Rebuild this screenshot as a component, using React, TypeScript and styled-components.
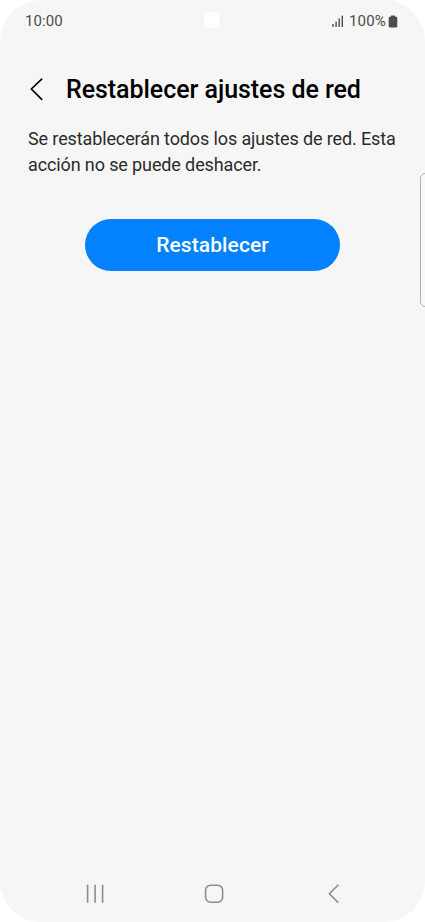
import styled, { createGlobalStyle } from "styled-components";

const GlobalStyle = createGlobalStyle`
    * {
        box-sizing: border-box;
    }
    body {
        margin: 0;
        background: #ffffff;
        font-family: Roboto, "Liberation Sans", sans-serif;
    }
`;

const Screen = styled.div`
    position: relative;
    display: flex;
    flex-direction: column;
    width: 425px;
    height: 922px;
    border-radius: 41px;
    background: #f6f6f6;
    overflow: hidden;
`;

const StatusBar = styled.header`
    display: flex;
    justify-content: space-between;
    align-items: center;
    height: 42px;
    padding: 0 27px 0 25px;
    color: #4c4c4c;
    font-size: 15px;
    line-height: 18px;
`;

const Time = styled.span`
    letter-spacing: 0.1px;
`;

const Indicators = styled.div`
    display: flex;
    align-items: center;
`;

const Percent = styled.span`
    margin: 0 2px 0 5px;
    letter-spacing: 0.2px;
`;

const Camera = styled.div`
    position: absolute;
    top: 12px;
    left: 204px;
    width: 16px;
    height: 16px;
    border-radius: 50%;
    background: #ffffff;
`;

const TitleBar = styled.div`
    display: flex;
    align-items: center;
    height: 48px;
    margin-top: 24px;
    padding-left: 30px;
`;

const IconButton = styled.button`
    display: flex;
    padding: 0;
    border: 0;
    background: none;
`;

const Title = styled.h1`
    margin: 0 0 0 22px;
    color: #000000;
    font-size: 25px;
    font-weight: 500;
    letter-spacing: -0.05px;
    line-height: 30px;
    white-space: nowrap;
`;

const Content = styled.main`
    display: flex;
    flex: 1;
    flex-direction: column;
    align-items: center;
    padding: 12px 28px 0;
`;

const Description = styled.p`
    width: 100%;
    margin: 0;
    color: #2b2b2b;
    font-size: 18px;
    letter-spacing: -0.12px;
    line-height: 26px;
    white-space: nowrap;
`;

const ResetButton = styled.button`
    width: 255px;
    height: 52px;
    margin-top: 40.6px;
    padding: 1px 0 0;
    border: 0;
    border-radius: 26px;
    background: #0381fe;
    color: #ffffff;
    font-family: inherit;
    font-size: 21px;
    font-weight: 500;
    letter-spacing: 0.1px;
`;

const EdgePanel = styled.div`
    position: absolute;
    top: 173px;
    right: -6px;
    width: 11px;
    height: 134px;
    border: 1px solid #b0b0b0;
    border-radius: 5px;
    background: #fafafa;
`;

const NavBar = styled.nav`
    display: flex;
    align-items: center;
    height: 57px;
    padding-left: 86px;
`;

const HomeButton = styled(IconButton)`
    margin: 0 104px 0 100px;
`;

const Signal = () => (
    <svg width="12" height="12" viewBox="0 0 12 12" fill="#4c4c4c">
        <rect x="0.3" y="9" width="1.4" height="3" rx="0.6" />
        <rect x="3.4" y="6.4" width="1.4" height="5.6" rx="0.6" />
        <rect x="6.5" y="3.2" width="1.4" height="8.8" rx="0.6" />
        <rect x="9.6" y="0.4" width="1.4" height="11.6" rx="0.6" />
    </svg>
);

const Battery = () => (
    <svg width="10" height="13" viewBox="0 0 10 13" fill="#4c4c4c">
        <path d="M3.4 0.4h3.2a.6.6 0 0 1 .6.6v.7h.8a1.3 1.3 0 0 1 1.3 1.3v8.2a1.3 1.3 0 0 1-1.3 1.3H2a1.3 1.3 0 0 1-1.3-1.3V3A1.3 1.3 0 0 1 2 1.7h.8V1a.6.6 0 0 1 .6-.6z" />
    </svg>
);

function App() {
    return (
        <>
            <GlobalStyle />
            <Screen>
                <StatusBar>
                    <Time>10:00</Time>
                    <Indicators>
                        <Signal />
                        <Percent>100%</Percent>
                        <Battery />
                    </Indicators>
                </StatusBar>
                <Camera />
                <TitleBar>
                    <IconButton aria-label="Atrás">
                        <svg width="14" height="24" viewBox="0 0 14 24" fill="none" stroke="#000000" strokeWidth="1.7" strokeLinecap="round" strokeLinejoin="round">
                            <path d="M11.7 1.1L1.3 11L11.7 21.4" />
                        </svg>
                    </IconButton>
                    <Title>Restablecer ajustes de red</Title>
                </TitleBar>
                <Content>
                    <Description>
                        Se restablecerán todos los ajustes de red. Esta
                        <br />
                        acción no se puede deshacer.
                    </Description>
                    <ResetButton>Restablecer</ResetButton>
                </Content>
                <EdgePanel />
                <NavBar>
                    <IconButton aria-label="Recientes">
                        <svg width="18" height="20" viewBox="0 0 18 20" fill="none" stroke="#8c8c8c" strokeWidth="1.6">
                            <path d="M1.6 0.8v18M9.1 0.8v18M16.6 0.8v18" />
                        </svg>
                    </IconButton>
                    <HomeButton aria-label="Inicio">
                        <svg width="20" height="20" viewBox="0 0 20 20" fill="none" stroke="#8c8c8c" strokeWidth="1.6">
                            <rect x="1.6" y="1.2" width="17" height="17" rx="5" />
                        </svg>
                    </HomeButton>
                    <IconButton aria-label="Volver">
                        <svg width="12" height="20" viewBox="0 0 12 20" fill="none" stroke="#8c8c8c" strokeWidth="1.6">
                            <path d="M10.4 0.8L1.4 9.7L10.4 18.7" />
                        </svg>
                    </IconButton>
                </NavBar>
            </Screen>
        </>
    );
}

export default App;
